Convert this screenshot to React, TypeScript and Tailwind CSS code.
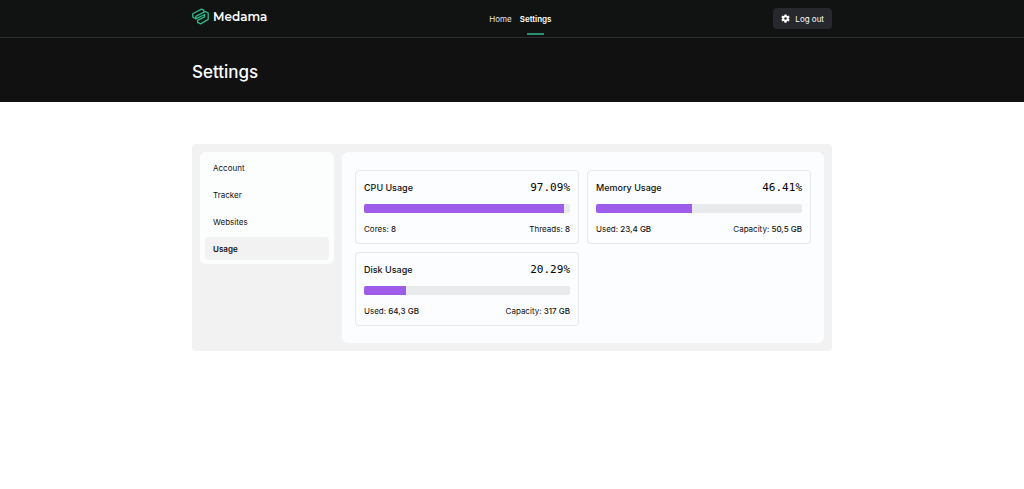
import React from "react";

type Detail = { label: string; value: string };
type Resource = { title: string; percent: number; details: Detail[] };

const resources: Resource[] = [
  {
    title: "CPU Usage",
    percent: 97.09,
    details: [
      { label: "Cores", value: "8" },
      { label: "Threads", value: "8" },
    ],
  },
  {
    title: "Memory Usage",
    percent: 46.41,
    details: [
      { label: "Used", value: "23,4 GB" },
      { label: "Capacity", value: "50,5 GB" },
    ],
  },
  {
    title: "Disk Usage",
    percent: 20.29,
    details: [
      { label: "Used", value: "64,3 GB" },
      { label: "Capacity", value: "317 GB" },
    ],
  },
];

const sections = ["Account", "Tracker", "Websites", "Usage"];

function Logo() {
  return (
    <a href="#home" className="flex items-center gap-1 text-white">
      <svg
        viewBox="0 0 17 17"
        className="size-[17px]"
        fill="none"
        stroke="#2fb88a"
        strokeWidth="1.3"
        strokeLinejoin="round"
        strokeLinecap="round"
        aria-hidden="true"
      >
        <path d="M3.8 10.8L0.8 9.2V5.7L9.4 1.1L11.8 2.2V4.2" />
        <path d="M3.8 10.8V8.3L13.2 3.5L16.2 5.1V11.4L8.6 15.9L5.6 14.4V12.3L12.6 8.8V6.5L3.8 10.8" />
      </svg>
      <span className="font-[Montserrat,Inter,sans-serif] text-[12px] leading-4 font-semibold">
        Medama
      </span>
    </a>
  );
}

function GearIcon() {
  return (
    <svg viewBox="0 0 24 24" className="size-[9px]" fill="currentColor" aria-hidden="true">
      <path
        fillRule="evenodd"
        d="M9.3 1h5.4l.7 3.4 1.7 1 3.3-1.2 2.7 4.7-2.6 2.2v1.8l2.6 2.2-2.7 4.7-3.3-1.2-1.7 1-.7 3.4H9.3l-.7-3.4-1.7-1-3.3 1.2-2.7-4.7 2.6-2.2v-1.8L.9 8.9l2.7-4.7 3.3 1.2 1.7-1zM12 8.5a3.5 3.5 0 1 0 0 7 3.5 3.5 0 0 0 0-7z"
      />
    </svg>
  );
}

function Header() {
  return (
    <header className="border-b border-[#2e302f] bg-[#111312]">
      <div className="mx-auto flex h-[37px] max-w-[640px] items-center justify-between">
        <div className="flex pb-1">
          <Logo />
        </div>
        <nav className="flex h-full gap-2 text-[8px]">
          <a href="#home" className="flex h-full items-center text-[#e4e4e4]">
            Home
          </a>
          <a
            href="#settings"
            aria-current="page"
            className="relative flex h-full items-center font-semibold text-white"
          >
            Settings
            <span className="absolute inset-x-[7px] bottom-[2px] h-[2px] bg-[#2a8f70]" />
          </a>
        </nav>
        <button
          type="button"
          className="flex h-[21px] items-center gap-[5px] rounded-[4px] bg-[#26282d] px-2 text-[8px] text-white"
        >
          <GearIcon />
          Log out
        </button>
      </div>
    </header>
  );
}

function UsageCard({ title, percent, details }: Resource) {
  return (
    <article className="rounded-[4px] border border-[#e6e8e8] px-2 pt-[9px] pb-1.5">
      <div className="flex items-center justify-between leading-4">
        <h2 className="text-[9px] font-medium">{title}</h2>
        <span className="font-['DejaVu_Sans_Mono',monospace] text-[11px] text-black">
          {percent.toFixed(2)}%
        </span>
      </div>
      <div
        role="progressbar"
        aria-label={title}
        aria-valuenow={percent}
        aria-valuemin={0}
        aria-valuemax={100}
        className="my-2 h-[9px] overflow-hidden rounded-[2px] bg-[#e9eaec]"
      >
        <div className="h-full bg-[#9d5cea]" style={{ width: `${percent}%` }} />
      </div>
      <div className="flex justify-between text-[8px] leading-4">
        {details.map((detail) => (
          <p key={detail.label}>
            {detail.label}: <span className="font-medium">{detail.value}</span>
          </p>
        ))}
      </div>
    </article>
  );
}

export default function App() {
  return (
    <div className="min-h-screen bg-white font-[Inter,sans-serif] text-[#111111]">
      <Header />
      <div className="bg-[#111111]">
        <div className="mx-auto flex h-16 max-w-[640px] items-center">
          <h1 className="pt-1.5 text-[17px] font-medium text-white">Settings</h1>
        </div>
      </div>
      <main className="mx-auto mt-[42px] grid max-w-[640px] grid-cols-[134px_1fr] items-start gap-2 rounded-[4px] bg-[#f2f2f2] p-2">
        <nav className="flex flex-col gap-1 rounded-[6px] bg-[#fcfefd] px-[5px] py-1 text-[8px]">
          {sections.map((section) => (
            <a
              key={section}
              href={`#${section.toLowerCase()}`}
              aria-current={section === "Usage" ? "page" : undefined}
              className="flex h-[23px] items-center rounded-[4px] px-2 aria-[current=page]:bg-[#f2f2f2] aria-[current=page]:font-semibold"
            >
              {section}
            </a>
          ))}
        </nav>
        <section className="grid grid-cols-2 gap-2 rounded-[6px] bg-[#fcfdfe] px-[13px] pt-[18px] pb-[17px]">
          {resources.map((resource) => (
            <UsageCard key={resource.title} {...resource} />
          ))}
        </section>
      </main>
    </div>
  );
}
